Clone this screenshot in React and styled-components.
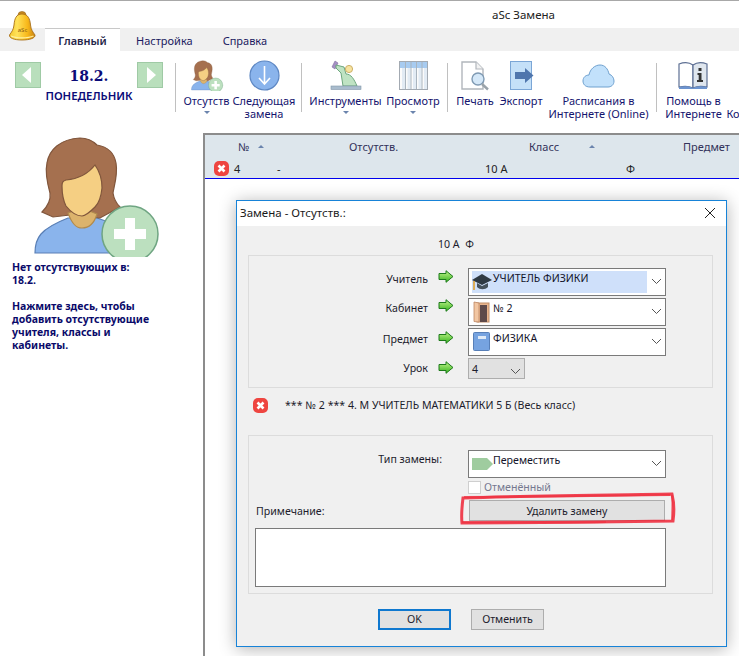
import React from "react";
import styled, { createGlobalStyle } from "styled-components";

const GlobalStyle = createGlobalStyle`
  html, body {
    margin: 0;
    padding: 0;
    background: #fff;
  }
  * {
    box-sizing: border-box;
  }
`;

const Page = styled.div`
  position: relative;
  width: 739px;
  height: 656px;
  overflow: hidden;
  background: #fff;
  border-top: 1px solid #a8a8a8;
  font-family: "Noto Sans", sans-serif;
  font-size: 11px;
  color: #1c1c2c;
`;

const TitleBar = styled.div`
  height: 27px;
  padding-left: 492px;
  line-height: 27px;
  font-size: 11.5px;
  color: #222;
`;

const BellMark = styled.svg`
  position: absolute;
  left: 8px;
  top: 10px;
  width: 29px;
  height: 30px;
`;

const TabBar = styled.div`
  height: 23px;
  display: flex;
  padding-left: 45px;
  background: #f0f0f0;
`;

const Tab = styled.div`
  height: 23px;
  line-height: 26px;
  padding: 0 15px;
  color: #1a1a60;
  ${(p) =>
    p.$active &&
    `
    width: 75px;
    margin-right: 1px;
    padding: 0;
    text-align: center;
    background: #fff;
    border-top: 1px solid #c8c8c8;
    font-weight: 600;
    color: #26264a;
    line-height: 24px;
  `}
`;

const Ribbon = styled.div`
  height: 82px;
  display: flex;
  align-items: flex-start;
  padding: 9px 0 0 15px;
  color: #14146e;
`;

const DateNav = styled.div`
  width: 148px;
  display: flex;
  align-items: flex-start;
  justify-content: space-between;
  margin: 2px 12px 0 0;
`;

const NavButton = styled.div`
  width: 26px;
  height: 26px;
  display: flex;
  align-items: center;
  justify-content: center;
  background: #b9dfbc;
  border: 1px solid #9fcaa5;
`;

const NavArrow = styled.div`
  width: 0;
  height: 0;
  border-top: 8px solid transparent;
  border-bottom: 8px solid transparent;
  ${(p) =>
    p.$left
      ? "border-right: 9px solid #fff; margin-right: 3px;"
      : "border-left: 9px solid #fff; margin-left: 3px;"}
`;

const DateText = styled.div`
  flex: 1;
  text-align: center;
`;

const DateNumber = styled.div`
  font-family: "DejaVu Serif", serif;
  font-weight: 700;
  font-size: 14px;
  line-height: 18px;
  margin-top: 5px;
  color: #0b0b78;
`;

const DateDay = styled.div`
  margin-top: 4px;
  font-size: 11.3px;
  font-weight: 600;
  line-height: 14px;
  color: #0b0b78;
  white-space: nowrap;
`;

const Separator = styled.div`
  width: 1px;
  height: 49px;
  margin: 3px 8px 0 0;
  background: #c0c0c0;
`;

const RibbonItem = styled.div`
  width: ${(p) => p.$width}px;
  margin-right: ${(p) => p.$gap || 0}px;
  flex-shrink: 0;
  display: flex;
  flex-direction: column;
  align-items: center;
`;

const RibbonIcon = styled.div`
  height: 34px;
  padding-top: ${(p) => p.$top || 0}px;
  display: flex;
  align-items: flex-start;
  justify-content: center;
`;

const RibbonLabel = styled.div`
  line-height: 13px;
  white-space: nowrap;
  text-align: center;
`;

const Caret = styled.div`
  width: 0;
  height: 0;
  margin-top: 4px;
  border-left: 3px solid transparent;
  border-right: 3px solid transparent;
  border-top: 3px solid #6b84ad;
`;

const Main = styled.div`
  display: flex;
  height: 523px;
`;

const Sidebar = styled.aside`
  width: 203px;
  flex-shrink: 0;
  padding: 2px 0 0 12px;
`;

const SidebarFigure = styled.div`
  height: 122px;
  margin-left: 18px;
`;

const SidebarText = styled.p`
  margin: 4px 0 13px;
  font-weight: 700;
  font-size: 10.5px;
  line-height: 13px;
  color: #0a0a6a;
`;

const Table = styled.section`
  flex: 1;
  border-left: 2px solid #8c8c8c;
  border-top: 2px solid #8c8c8c;
`;

const TableHead = styled.div`
  background: #dde6ec;
  border-bottom: 1px solid #0000ee;
  height: 44px;
`;

const HeadRow = styled.div`
  display: grid;
  grid-template-columns: 33px 111px 180px 154px 1fr;
  height: 22px;
  line-height: 23px;
  color: #32325a;
`;

const DataRow = styled.div`
  display: grid;
  grid-template-columns: 29px 43px 208px 141px 1fr;
  align-items: center;
  height: 22px;
  color: #222;
`;

const SortCell = styled.div`
  display: flex;
  align-items: center;
  gap: ${(p) => p.$gap}px;
`;

const SortArrow = styled.div`
  width: 0;
  height: 0;
  border-left: 3px solid transparent;
  border-right: 3px solid transparent;
  border-bottom: 3px solid #6b84ad;
`;

const ErrorIcon = styled.svg`
  display: block;
  width: 15px;
  height: 15px;
  margin-left: ${(p) => p.$indent || 0}px;
`;

const Dialog = styled.div`
  position: absolute;
  left: 236px;
  top: 199px;
  width: 491px;
  height: 447px;
  border: 1px solid #1783d8;
  background: #f0f0f0;
  box-shadow: 0 2px 16px rgba(0, 0, 0, 0.3);
`;

const DialogTitle = styled.div`
  display: flex;
  align-items: center;
  justify-content: space-between;
  height: 25px;
  padding: 0 10px 2px 3px;
  background: #fff;
  color: #1a1a1a;
  font-size: 11.5px;
`;

const DialogBody = styled.div`
  padding: 0 13px 0 11px;
  font-size: 10.6px;
`;

const Summary = styled.div`
  height: 29px;
  padding-left: 190px;
  line-height: 36px;
`;

const Group = styled.div`
  border: 1px solid #dcdcdc;
  width: 465px;
  height: ${(p) => p.$height}px;
  padding-top: ${(p) => p.$top}px;
`;

const FormGrid = styled.div`
  display: grid;
  grid-template-columns: 181px 38px 198px;
  row-gap: 2px;
`;

const Label = styled.label`
  text-align: right;
  padding: ${(p) => p.$top || 4}px 2px 0 0;
  line-height: 15px;
`;

const ArrowCell = styled.svg`
  width: 16px;
  height: 13px;
  margin: ${(p) => p.$top}px 0 0 8px;
`;

const Combo = styled.div`
  position: relative;
  display: flex;
  align-items: flex-start;
  width: 198px;
  height: 28px;
  padding: 2px 3px;
  background: #fff;
  border: 1px solid #7a7a7a;
  color: #14142a;
`;

const ComboValue = styled.div`
  display: flex;
  align-items: flex-start;
  width: 175px;
  height: 22px;
  line-height: 14px;
  background: ${(p) => (p.$selected ? "#cfe0fa" : "transparent")};
`;

const ComboIcon = styled.svg`
  flex-shrink: 0;
  width: 21px;
  height: 22px;
`;

const Chevron = styled.svg`
  position: absolute;
  right: 3px;
  top: 9px;
  width: 11px;
  height: 7px;
`;

const SmallSelect = styled.div`
  position: relative;
  width: 57px;
  height: 21px;
  padding-left: 3px;
  line-height: 21px;
  background: #e1e1e1;
  border: 1px solid #adadad;
`;

const Conflict = styled.div`
  display: flex;
  align-items: flex-start;
  height: 47px;
  padding: 10px 0 0 5px;
  line-height: 14px;
  gap: 17px;
`;

const TypeGrid = styled.div`
  display: grid;
  grid-template-columns: 193px 26px 198px;
`;

const TypeLabel = styled.div`
  text-align: right;
  padding-top: 2px;
  line-height: 15px;
`;

const CheckRow = styled.div`
  grid-column: 3;
  display: flex;
  align-items: center;
  gap: 3px;
  height: 14px;
  margin-top: 2px;
  color: #75788f;
`;

const CheckBox = styled.div`
  width: 13px;
  height: 13px;
  background: #fff;
  border: 1px solid #cfcfcf;
`;

const NoteRow = styled.div`
  display: flex;
  align-items: center;
  justify-content: space-between;
  width: 417px;
  height: 21px;
  margin-top: 6px;
  padding-left: 7px;
`;

const DeleteWrap = styled.div`
  position: relative;
`;

const RedMark = styled.svg`
  position: absolute;
  left: -9px;
  top: -8px;
  width: 216px;
  height: 34px;
  pointer-events: none;
`;

const WideButton = styled.div`
  width: 196px;
  height: 21px;
  margin-right: 1px;
  text-align: center;
  line-height: 20px;
  background: #e1e1e1;
  border: 1px solid #adadad;
`;

const NoteBox = styled.div`
  width: 411px;
  height: 59px;
  margin: 7px 0 0 6px;
  background: #fff;
  border: 1px solid #7a7a7a;
`;

const Actions = styled.div`
  display: flex;
  gap: 20px;
  margin: 15px 0 0 130px;
`;

const Button = styled.div`
  width: 73px;
  height: 21px;
  line-height: ${(p) => (p.$primary ? "17px" : "19px")};
  text-align: center;
  background: #e1e1e1;
  border: ${(p) => (p.$primary ? "2px solid #0f78cf" : "1px solid #adadad")};
`;

const Woman = ({ width, height }) => (
  <svg width={width} height={height} viewBox="30 135 132 122">
    <path
      d="M35 253 C35 238 40 229 68 218 L97 218 C108 221 113 226 116 230 L116 253 Z"
      fill="#8ab4ec"
      stroke="#5a7fb5"
      strokeWidth="1.2"
    />
    <path
      d="M42 212 C48 206 51 200 50 193 C47 182 45 172 47 163 C49 150 60 139 80 138 C88 138 93 141 97 145 C108 147 114 152 116 163 C118 175 114 186 113 193 C114 200 117 204 120 207 L100 218 L70 215 L53 217 Z"
      fill="#a5704f"
      stroke="#80563c"
      strokeWidth="1.2"
    />
    <path
      d="M68 213 C72 224 76 228 82 228 C89 228 94 224 97 214 L82 208 Z"
      fill="#dcb36c"
      stroke="#b08a4e"
      strokeWidth="1.2"
    />
    <path
      d="M95 165 C100 172 102 180 102 188 C101 198 99 203 95 207 C90 212 86 216 82 216 C76 216 70 211 66 206 C63 200 62 192 62 186 C62 182 63 181 66 180 C78 179 88 174 95 165 Z"
      fill="#f5cf83"
      stroke="#80563c"
      strokeWidth="1.2"
    />
    <circle cx="130" cy="234" r="28" fill="#bce0bf" stroke="#6fa582" strokeWidth="1.5" />
    <path d="M114 229 H125 V218 H135 V229 H146 V239 H135 V250 H125 V239 H114 Z" fill="#fff" />
  </svg>
);

const NextIcon = () => (
  <svg width="31" height="31" viewBox="0 0 31 31">
    <circle cx="15.5" cy="15.5" r="14.5" fill="#8ab4ec" stroke="#5c86c2" strokeWidth="1.2" />
    <path d="M15.5 6 V23 M10 18 L15.5 24 L21 18" fill="none" stroke="#fff" strokeWidth="1.6" />
  </svg>
);

const ToolsIcon = () => (
  <svg width="33" height="31" viewBox="0 0 33 31">
    <path d="M3 7 L6 1 L9 3 L6 9 Z" fill="#a58fc4" stroke="#7e6da0" strokeWidth="0.6" />
    <path
      d="M7 5 L15 7 L17 14 C22 14 25 19 28 26 L14 26 L12 13 L7 8 Z"
      fill="#bfe3c3"
      stroke="#6da67e"
      strokeWidth="1"
    />
    <circle cx="20" cy="9" r="3.6" fill="#f7e3a0" stroke="#c6a85c" strokeWidth="0.9" />
    <rect x="2" y="26" width="30" height="3.500" fill="#a9bccd" stroke="#8397a8" strokeWidth="0.6" />
  </svg>
);

const GridIcon = () => (
  <svg width="29" height="29" viewBox="0 0 29 29">
    <rect x="0.5" y="0.5" width="28" height="28" fill="#fbfbfb" stroke="#a3aab2" />
    <rect x="1" y="1" width="27" height="6" fill="#a7cbf0" />
    <rect x="3" y="7" width="3" height="21" fill="#e2ebf4" />
    <rect x="8.500" y="7" width="3" height="21" fill="#e2ebf4" />
    <rect x="14" y="7" width="3" height="21" fill="#e2ebf4" />
    <rect x="19.500" y="7" width="3" height="21" fill="#e2ebf4" />
    <rect x="25" y="7" width="3" height="21" fill="#e2ebf4" />
    <path d="M6.5 1 V28 M12 1 V28 M17.500 1 V28 M23 1 V28" stroke="#a9b4be" fill="none" />
  </svg>
);

const PreviewIcon = () => (
  <svg width="29" height="30" viewBox="0 0 29 30">
    <path d="M1 1 H15 L22 8 V28 H1 Z" fill="#fff" stroke="#b1b6bc" strokeWidth="1.4" />
    <path d="M15 1 V8 H22" fill="#f2f2f2" stroke="#b1b6bc" strokeWidth="1.2" />
    <circle cx="17" cy="18" r="6" fill="#d5e8f8" stroke="#7f9ab3" strokeWidth="1.4" />
    <path d="M21 23 L27 28.500" stroke="#9aa3aa" strokeWidth="2.4" />
  </svg>
);

const ExportIcon = () => (
  <svg width="25" height="29" viewBox="0 0 25 29">
    <rect x="1.500" y="0.500" width="21" height="28" fill="#c4e0f8" stroke="#7ba6d6" />
    <path d="M6 11 H16 V7 L24.500 14.500 L16 22 V18 H6 Z" fill="#4f76ad" />
  </svg>
);

const CloudIcon = () => (
  <svg width="33" height="24" viewBox="0 0 33 24">
    <path
      d="M8 23 C3 23 1 20 1 17 C1 13 4 11 7 11 C8 5 13 1 18 1 C23 1 26 5 27 10 C30 11 32 14 32 17 C32 21 29 23 26 23 Z"
      fill="#c2e1fb"
      stroke="#6fa1cf"
      strokeWidth="1"
    />
  </svg>
);

const BookIcon = () => (
  <svg width="31" height="30" viewBox="0 0 31 30">
    <path d="M1 26 V3 C6 1 11 1 15 4 V27 C11 25 6 25 1 26 Z" fill="#fff" stroke="#5d6f93" strokeWidth="1.2" />
    <path d="M15 4 C19 1 24 1 29 3 V26 C24 25 19 25 15 27 Z" fill="#dfe6ee" stroke="#5d6f93" strokeWidth="1.2" />
    <path d="M1 26 C6 25 11 25 15 27 C19 25 24 25 29 26 V28 H1 Z" fill="#6d94cf" />
    <rect x="20.500" y="7" width="3" height="3" fill="#333" />
    <path d="M19.500 12 H23.500 V19 H25 V21 H19 V19 H20.700 V14 H19.500 Z" fill="#333" />
  </svg>
);

const GreenArrow = ({ top, id }) => (
  <ArrowCell $top={top} viewBox="0 0 16 13">
    <defs>
      <linearGradient id={id} x1="0" x2="0" y1="0" y2="1">
        <stop offset="0" stopColor="#c4f58a" />
        <stop offset="1" stopColor="#35b31e" />
      </linearGradient>
    </defs>
    <path
      d="M1 3.500 H8 V0.700 L15 6.500 L8 12.300 V9.500 H1 Z"
      fill={`url(#${id})`}
      stroke="#1c7a1a"
      strokeWidth="1"
    />
  </ArrowCell>
);

const CrossIcon = ({ indent }) => (
  <ErrorIcon $indent={indent} viewBox="0 0 15 15">
    <rect x="0" y="0" width="15" height="15" rx="5" fill="#ee4540" />
    <path d="M4.500 4.500 L10.500 10.500 M10.500 4.500 L4.500 10.500" stroke="#fff" strokeWidth="2.6" />
  </ErrorIcon>
);

const HatIcon = () => (
  <ComboIcon viewBox="0 0 21 22">
    <path d="M0 9 L10 3 L20 9 L10 14 Z" fill="#2f3a44" />
    <path d="M5 12 V16 C8 19 13 19 16 16 V12 L10 15 Z" fill="#46525c" />
    <path d="M2 10 V19" stroke="#e0a030" strokeWidth="1.6" />
  </ComboIcon>
);

const DoorIcon = () => (
  <ComboIcon viewBox="0 0 21 22">
    <rect x="5" y="2" width="12" height="19" fill="#e8b48c" stroke="#c08d68" />
    <rect x="8" y="4" width="7" height="17" fill="#5e4a4a" />
    <path d="M2 1 L7 2 V21 L2 20.500 Z" fill="#f2c6a2" stroke="#bd8763" strokeWidth="0.8" />
  </ComboIcon>
);

const NotebookIcon = () => (
  <ComboIcon viewBox="0 0 21 22">
    <rect x="1.500" y="1.500" width="16" height="18" rx="1" fill="#76a3e0" stroke="#577fb8" />
    <rect x="6" y="5" width="8" height="3" fill="#dfeaf7" />
  </ComboIcon>
);

const TagIcon = () => (
  <ComboIcon viewBox="0 0 21 22">
    <path d="M0 5 H15 L21 11 L15 17 H0 Z" fill="#9fcc9f" />
  </ComboIcon>
);

const ChevronDown = () => (
  <Chevron viewBox="0 0 11 7">
    <path d="M1 1 L5.500 5.500 L10 1" fill="none" stroke="#555" strokeWidth="1" />
  </Chevron>
);

const Select = ({ icon, selected, children }) => (
  <Combo>
    <ComboValue $selected={selected}>
      {icon}
      {children}
    </ComboValue>
    <ChevronDown />
  </Combo>
);

export default function App() {
  return (
    <>
      <GlobalStyle />
      <Page>
        <TitleBar>aSc Замена</TitleBar>
        <BellMark viewBox="0 0 29 30">
          <defs>
            <linearGradient id="bell" x1="0" x2="1" y1="0" y2="0">
              <stop offset="0" stopColor="#f6c92e" />
              <stop offset="0.3" stopColor="#ffe25a" />
              <stop offset="0.7" stopColor="#f8b81a" />
              <stop offset="1" stopColor="#c98312" />
            </linearGradient>
          </defs>
          <ellipse cx="14" cy="4" rx="4" ry="3.500" fill="#c98a1e" stroke="#96631a" strokeWidth="0.6" />
          <path
            d="M14 3 C20 3 22 8 22.500 14 C23 19 25 21 27 24 C27.500 27 22 29 14 29 C6 29 1 27 1.500 24 C3.500 21 5.500 19 6 14 C6.500 8 8 3 14 3 Z"
            fill="url(#bell)"
            stroke="#a9701a"
            strokeWidth="0.9"
          />
          <path d="M3 25 C8 27.500 20 27.500 25.500 25" fill="none" stroke="#fff0a0" strokeWidth="1.2" />
          <text x="14.500" y="21" fontSize="6" textAnchor="middle" fill="#8a5a10" fontFamily="Noto Sans">
            aSc
          </text>
        </BellMark>
        <TabBar>
          <Tab $active>Главный</Tab>
          <Tab>Настройка</Tab>
          <Tab>Справка</Tab>
        </TabBar>
        <Ribbon>
          <DateNav>
            <NavButton>
              <NavArrow $left />
            </NavButton>
            <DateText>
              <DateNumber>18.2.</DateNumber>
              <DateDay>ПОНЕДЕЛЬНИК</DateDay>
            </DateText>
            <NavButton>
              <NavArrow />
            </NavButton>
          </DateNav>
          <Separator />
          <RibbonItem $width={45} $gap={5}>
            <RibbonIcon>
              <Woman width={34} height={31} />
            </RibbonIcon>
            <RibbonLabel>Отсутств</RibbonLabel>
            <Caret />
          </RibbonItem>
          <RibbonItem $width={60} $gap={7}>
            <RibbonIcon>
              <NextIcon />
            </RibbonIcon>
            <RibbonLabel>
              Следующая
              <br />
              замена
            </RibbonLabel>
          </RibbonItem>
          <Separator />
          <RibbonItem $width={71} $gap={5}>
            <RibbonIcon>
              <ToolsIcon />
            </RibbonIcon>
            <RibbonLabel>Инструменты</RibbonLabel>
            <Caret />
          </RibbonItem>
          <RibbonItem $width={54} $gap={7}>
            <RibbonIcon $top={1}>
              <GridIcon />
            </RibbonIcon>
            <RibbonLabel>Просмотр</RibbonLabel>
            <Caret />
          </RibbonItem>
          <Separator />
          <RibbonItem $width={38} $gap={5}>
            <RibbonIcon $top={1}>
              <PreviewIcon />
            </RibbonIcon>
            <RibbonLabel>Печать</RibbonLabel>
          </RibbonItem>
          <RibbonItem $width={44} $gap={5}>
            <RibbonIcon $top={1}>
              <ExportIcon />
            </RibbonIcon>
            <RibbonLabel>Экспорт</RibbonLabel>
          </RibbonItem>
          <RibbonItem $width={101} $gap={7}>
            <RibbonIcon $top={4}>
              <CloudIcon />
            </RibbonIcon>
            <RibbonLabel>
              Расписания в
              <br />
              Интернете (Online)
            </RibbonLabel>
          </RibbonItem>
          <Separator />
          <RibbonItem $width={57} $gap={5}>
            <RibbonIcon $top={1}>
              <BookIcon />
            </RibbonIcon>
            <RibbonLabel>
              Помощь в
              <br />
              Интернете
            </RibbonLabel>
          </RibbonItem>
          <RibbonItem $width={12}>
            <RibbonIcon />
            <RibbonLabel>
              <br />
              Ко
            </RibbonLabel>
          </RibbonItem>
        </Ribbon>
        <Main>
          <Sidebar>
            <SidebarFigure>
              <Woman width={132} height={122} />
            </SidebarFigure>
            <SidebarText>
              Нет отсутствующих в:
              <br />
              18.2.
            </SidebarText>
            <SidebarText>
              Нажмите здесь, чтобы
              <br />
              добавить отсутствующие
              <br />
              учителя, классы и
              <br />
              кабинеты.
            </SidebarText>
          </Sidebar>
          <Table>
            <TableHead>
              <HeadRow>
                <span />
                <SortCell $gap={9}>
                  № <SortArrow />
                </SortCell>
                <span>Отсутств.</span>
                <SortCell $gap={30}>
                  Класс <SortArrow />
                </SortCell>
                <span>Предмет</span>
              </HeadRow>
              <DataRow>
                <CrossIcon indent={9} />
                <span>4</span>
                <span>-</span>
                <span>10 А</span>
                <span>Ф</span>
              </DataRow>
            </TableHead>
          </Table>
        </Main>
        <Dialog>
          <DialogTitle>
            Замена - Отсутств.:
            <svg width="12" height="12" viewBox="0 0 12 12">
              <path d="M1 1 L11 11 M11 1 L1 11" stroke="#222" strokeWidth="1" />
            </svg>
          </DialogTitle>
          <DialogBody>
            <Summary>10 А&nbsp; Ф</Summary>
            <Group $height={133} $top={12}>
              <FormGrid>
                <Label>Учитель</Label>
                <GreenArrow id="arrow-teacher" top={2} />
                <Select selected icon={<HatIcon />}>
                  УЧИТЕЛЬ ФИЗИКИ
                </Select>
                <Label $top={3}>Кабинет</Label>
                <GreenArrow id="arrow-room" top={1} />
                <Select icon={<DoorIcon />}>№ 2</Select>
                <Label>Предмет</Label>
                <GreenArrow id="arrow-subject" top={3} />
                <Select icon={<NotebookIcon />}>ФИЗИКА</Select>
                <Label $top={3}>Урок</Label>
                <GreenArrow id="arrow-lesson" top={3} />
                <SmallSelect>
                  4
                  <ChevronDown />
                </SmallSelect>
              </FormGrid>
            </Group>
            <Conflict>
              <CrossIcon indent={0} />
              *** № 2 *** 4. М УЧИТЕЛЬ МАТЕМАТИКИ 5 Б (Весь класс)
            </Conflict>
            <Group $height={159} $top={14}>
              <TypeGrid>
                <TypeLabel>Тип замены:</TypeLabel>
                <span />
                <Select icon={<TagIcon />}>Переместить</Select>
                <CheckRow>
                  <CheckBox />
                  Отменённый
                </CheckRow>
              </TypeGrid>
              <NoteRow>
                Примечание:
                <DeleteWrap>
                  <WideButton>Удалить замену</WideButton>
                  <RedMark viewBox="0 0 216 34">
                    <path
                      d="M3 6 C60 4 150 3 212 2 C214 10 214 22 213 29 C150 30 60 31 2 31 C1 22 2 14 3 6 Z"
                      fill="none"
                      stroke="#ee2436"
                      strokeWidth="3"
                      opacity="0.85"
                    />
                    <path
                      d="M2 30 C60 29 100 31 146 30 M212 3 C213 10 212 22 212 28 M4 5 C60 5 150 4 210 3"
                      fill="none"
                      stroke="#f03040"
                      strokeWidth="2"
                      opacity="0.7"
                    />
                  </RedMark>
                </DeleteWrap>
              </NoteRow>
              <NoteBox />
            </Group>
            <Actions>
              <Button $primary>OK</Button>
              <Button>Отменить</Button>
            </Actions>
          </DialogBody>
        </Dialog>
      </Page>
    </>
  );
}
